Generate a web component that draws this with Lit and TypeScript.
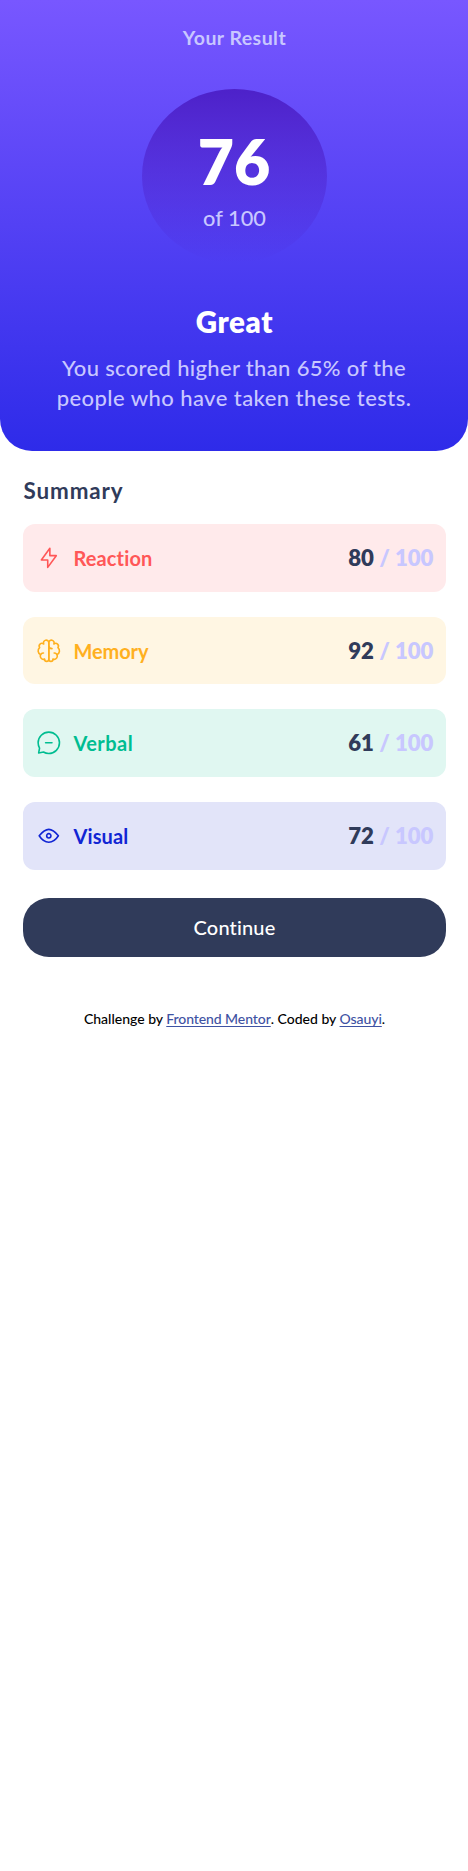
import { LitElement, html, svg, css } from "lit";
import { customElement } from "lit/decorators.js";

const ICONS = {
  reaction: svg`<path d="M10.833 8.333V2.5l-6.666 9.167h5V17.5l6.666-9.167h-5Z"/>`,
  memory: svg`<path d="M5.833 11.667a2.5 2.5 0 1 0 .834 4.858"/><path d="M3.553 13.004a3.333 3.333 0 0 1-.728-5.53m.025-.067a2.083 2.083 0 0 1 2.983-2.824m.199.054A2.083 2.083 0 1 1 10 3.75v12.917a1.667 1.667 0 0 1-3.333 0M10 5.833a2.5 2.5 0 0 0 2.5 2.5m1.667 3.334a2.5 2.5 0 1 1-.834 4.858"/><path d="M16.447 13.004a3.333 3.333 0 0 0 .728-5.53m-.025-.067a2.083 2.083 0 0 0-2.983-2.824m-.199.054A2.083 2.083 0 1 0 10 3.75v12.917a1.667 1.667 0 0 0 3.333 0"/>`,
  verbal: svg`<path d="M7.5 10h5M10 18.333A8.333 8.333 0 1 0 1.667 10c0 1.518.406 2.942 1.115 4.167l-.699 3.75 3.75-.699A8.295 8.295 0 0 0 10 18.333Z"/>`,
  visual: svg`<path d="M10 11.667a1.667 1.667 0 1 0 0-3.334 1.667 1.667 0 0 0 0 3.334Z"/><path d="M17.5 10c-1.574 2.492-4.402 5-7.5 5s-5.926-2.508-7.5-5C4.416 7.632 6.66 5 10 5s5.584 2.632 7.5 5Z"/>`,
};

const RESULTS: { id: keyof typeof ICONS; label: string; score: number }[] = [
  { id: "reaction", label: "Reaction", score: 80 },
  { id: "memory", label: "Memory", score: 92 },
  { id: "verbal", label: "Verbal", score: 61 },
  { id: "visual", label: "Visual", score: 72 },
];

@customElement("app-root")
export class AppRoot extends LitElement {
  static styles = css`
    :host {
      display: block;
      min-height: 100vh;
      background: #fff;
      font-family: Lato, "Hanken Grotesk", sans-serif;
      font-weight: 500;
      font-variant-ligatures: none;
    }
    h1, h2, h3, p { margin: 0; }
    .hero {
      box-sizing: border-box;
      height: 451px;
      padding-top: 26px;
      display: flex;
      flex-direction: column;
      align-items: center;
      text-align: center;
      color: #c8c7ff;
      background: linear-gradient(#7857ff, #2e2be9);
      border-radius: 0 0 32px 32px;
    }
    .title { padding-left: 1px; font-size: 19.5px; line-height: 24px; font-weight: 700; letter-spacing: 0.46px; }
    .circle {
      box-sizing: border-box;
      width: 185px;
      height: 174px;
      margin-top: 39px;
      padding-top: 40px;
      border-radius: 50%;
      background: linear-gradient(#4d21c9, rgba(37, 33, 201, 0));
    }
    .score { color: #fff; font-size: 62.5px; line-height: 64px; font-weight: 800; }
    .of { font-size: 21.8px; line-height: 28px; margin-top: 11px; padding-left: 1px; }
    .grade { margin-top: 41px; padding-left: 1px; color: #fff; font-size: 29.5px; line-height: 36px; font-weight: 800; letter-spacing: 0.6px; }
    .text { margin-top: 13px; font-size: 22px; line-height: 30px; letter-spacing: 0.34px; }
    .second { letter-spacing: 0.44px; }
    .body { padding: 26px 22px 0 23px; }
    .heading { padding-left: 0.5px; font-size: 22.4px; line-height: 28px; font-weight: 700; letter-spacing: 0.9px; color: #303b5a; }
    .list { display: grid; gap: 25.2px; margin-top: 19px; }
    .row {
      box-sizing: border-box;
      height: 67.5px;
      padding: 0 12.5px;
      display: flex;
      align-items: center;
      border-radius: 12px;
    }
    .icon { width: 25.6px; height: 25.6px; flex: none; fill: none; stroke: currentColor; stroke-width: 1.25; stroke-linecap: round; stroke-linejoin: round; }
    .label { margin-left: 12.4px; flex: 1; font-size: 20px; line-height: 24px; font-weight: 700; letter-spacing: 0.12px; }
    .memory .label { letter-spacing: -0.1px; padding-top: 1px; }
    .verbal .label { letter-spacing: 0.45px; }
    .points { font-size: 22.2px; line-height: 28px; font-weight: 800; color: #303b5a; padding-top: 0.6px; }
    .max { color: #c8c7ff; }
    .reaction { background: #ffeaeb; color: #ff5757; }
    .memory { background: #fff6e3; color: #ffb01f; }
    .verbal { background: #e0f7f1; color: #00bd91; }
    .visual { background: #e2e4f9; color: #1125d4; }
    .button {
      display: block;
      width: 100%;
      height: 59px;
      margin: 28.4px 0 0;
      padding: 0;
      border: 0;
      border-radius: 26px;
      background: #303b5a;
      color: #fff;
      font: inherit;
      font-size: 20px;
      letter-spacing: 0.15px;
    }
    .footer { margin-top: 51.6px; text-align: center; font-size: 14px; line-height: 20px; color: #000; }
    .link { color: #3e52a3; letter-spacing: -0.08px; text-underline-offset: 2px; text-decoration-skip-ink: none; text-decoration-thickness: 1px; }
  `;

  render() {
    return html`
      <section class="hero">
        <h1 class="title">Your Result</h1>
        <div class="circle">
          <div class="score">76</div>
          <div class="of">of 100</div>
        </div>
        <h2 class="grade">Great</h2>
        <p class="text">You scored higher than 65% of the<br /><span class="second">people who have taken these tests.</span></p>
      </section>
      <main class="body">
        <h3 class="heading">Summary</h3>
        <div class="list">
          ${RESULTS.map((r) => html`
            <div class="row ${r.id}">
              <svg class="icon" viewBox="0 0 20 20">${ICONS[r.id]}</svg>
              <span class="label">${r.label}</span>
              <span class="points">${r.score}<span class="max"> / 100</span></span>
            </div>`)}
        </div>
        <button class="button">Continue</button>
        <p class="footer">Challenge by <a class="link" href="#">Frontend Mentor</a>. Coded by <a class="link" href="#">Osauyi</a>.</p>
      </main>
    `;
  }
}
